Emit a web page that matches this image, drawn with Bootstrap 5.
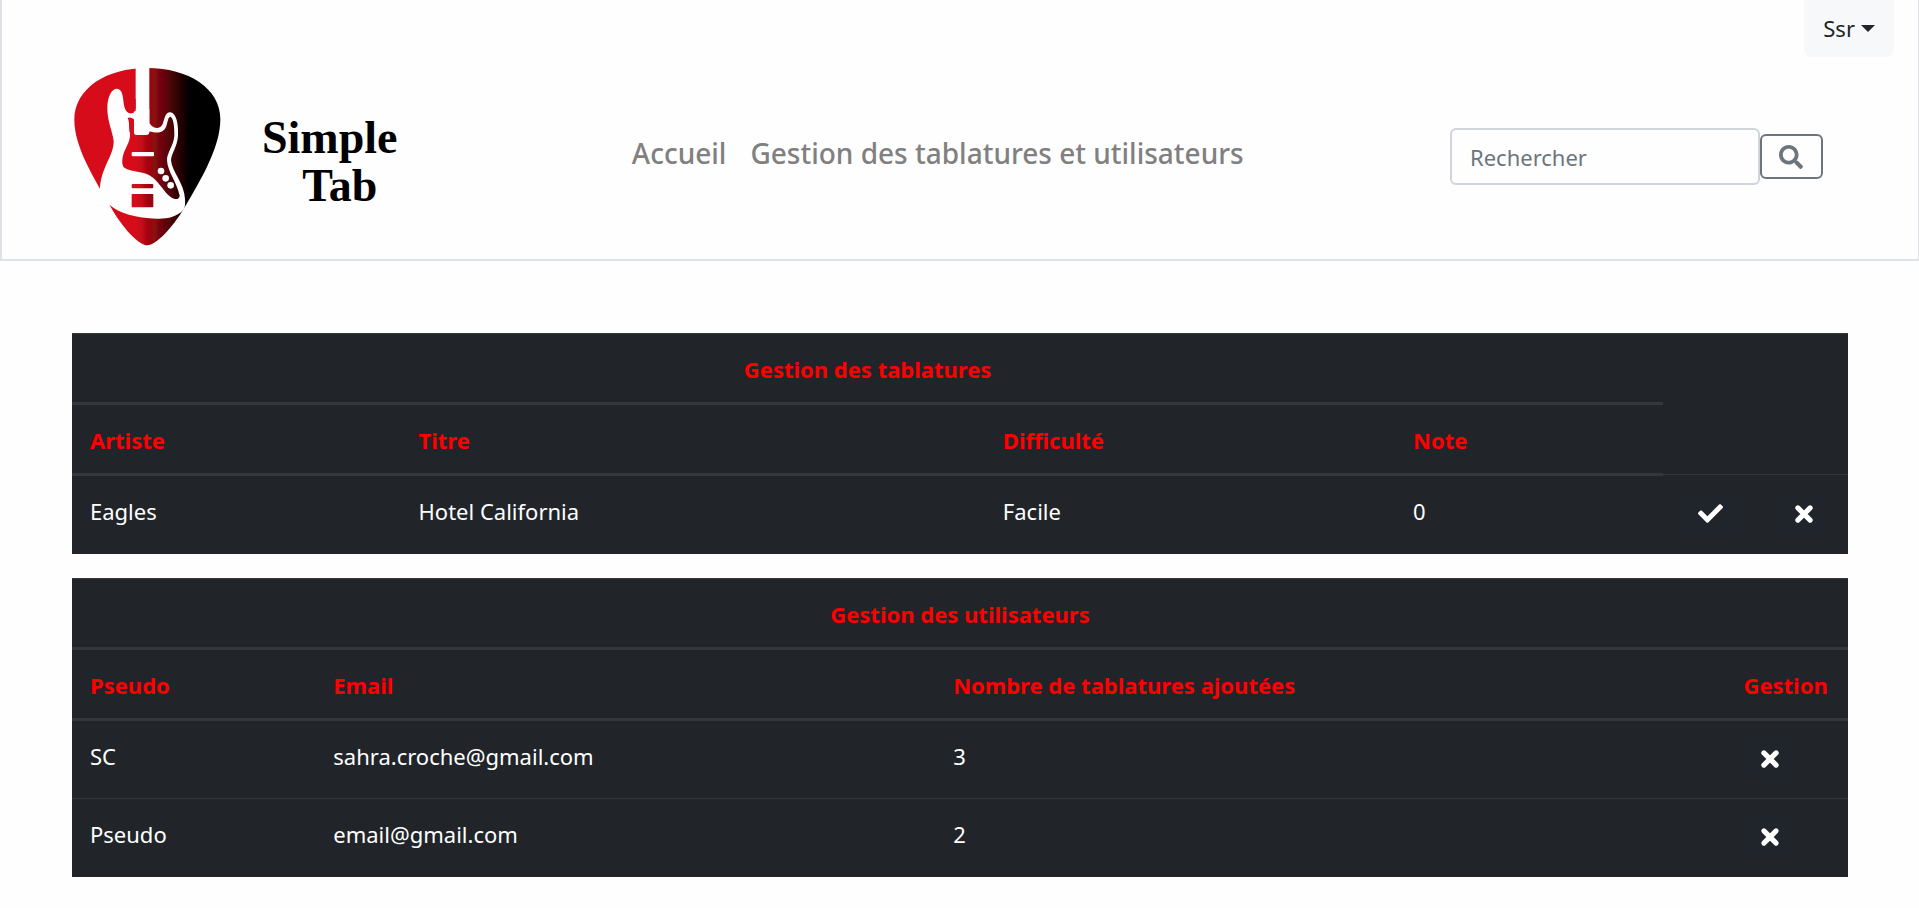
<!DOCTYPE html>
<html lang="fr">
<head>
<meta charset="utf-8">
<meta name="viewport" content="width=device-width, initial-scale=1">
<title>Simple Tab</title>
<link href="https://cdn.jsdelivr.net/npm/bootstrap@5.3.0/dist/css/bootstrap.min.css" rel="stylesheet">
<style>
  body { background: #fefefe; font-family: "Noto Sans", "Open Sans", sans-serif; font-size: 22px; line-height: 36px; }
  .site-header { border: 2px solid #dee2e6; border-top: 0; border-right-width: 1px; }
  .user-btn { height: 57px; padding: 0 19px; font-size: 22px; background: #f7f8fa; border: 0; border-radius: 0 0 8px 8px; }
  .user-btn.dropdown-toggle::after { border-width: 7px; border-bottom: 0; margin-left: 6px; vertical-align: 5px; }
  .header-main { padding: 2px 95px 5px 58px; }
  .brand-link { color: #000; padding-right: 28px; }
  .brand-name { font: bold 46px/48px "Liberation Serif", serif; text-align: center; margin-left: 22px; padding-top: 10px; }
  .brand-name span { display: block; padding-left: 20px; }
  .main-nav .nav-link { font-size: 28px; line-height: 36px; font-weight: 500; color: #808080; padding: 0 12px 8px; }
  .search-box { width: 310px; height: 57px; font-size: 22px; padding: 0 18px; border: 2px solid #ced4da; border-radius: 6px; background: #fefefe; }
  .search-box::placeholder { color: #6c757d; }
  .search-btn { width: 63px; height: 45px; padding: 0; border-width: 2px; border-radius: 6px; }
  .page-body { padding: 72px 71px 31px 72px; }
  .admin-table { --bs-table-bg: #212529; --bs-table-border-color: #32383e; table-layout: fixed; margin: 0; }
  .admin-table > * > tr > * { padding: 17px 18px 15px; vertical-align: top; }
  .admin-table th { color: #f00; border-bottom-width: 3px; white-space: nowrap; }
  .admin-table thead tr:first-child > * { border-top: 1px solid #32383e; }
  .admin-table tbody tr:last-child td { border-bottom: 0; }
  .admin-table tbody td { height: 79px; }
  .icon-btn { display: flex; align-items: center; justify-content: center; width: 53px; height: 41px; margin-top: 1px; padding: 0; border: 0; border-radius: 6px; background: #20252c; color: #fff; }
  .icon-btn.wide { width: 59px; }
</style>
</head>
<body>
<header class="site-header">
  <div class="d-flex justify-content-end pe-4">
    <div class="dropdown">
      <button class="btn user-btn dropdown-toggle" type="button" data-bs-toggle="dropdown" aria-expanded="false">Ssr</button>
    </div>
  </div>
  <div class="header-main d-flex align-items-center justify-content-between">
    <a class="brand-link d-flex align-items-center text-decoration-none" href="#">
      <svg width="180" height="195" viewBox="0 0 540 585" aria-hidden="true">
        <defs>
          <linearGradient id="pickFill" gradientUnits="userSpaceOnUse" x1="43" y1="0" x2="481" y2="0">
            <stop offset="0" stop-color="#d60c1b"/><stop offset=".42" stop-color="#d60c1b"/>
            <stop offset=".46" stop-color="#c21018"/><stop offset=".5" stop-color="#a8000f"/>
            <stop offset=".525" stop-color="#9a0410"/><stop offset=".55" stop-color="#86140f"/>
            <stop offset=".585" stop-color="#780010"/><stop offset=".66" stop-color="#4c0606"/>
            <stop offset=".73" stop-color="#220002"/><stop offset=".79" stop-color="#000"/>
          </linearGradient>
        </defs>
        <path fill="url(#pickFill)" d="M262 27C385 27 481 88 481 180C481 262 429 352 373 447C338 505 288 559 262 559C236 559 186 505 150 440C100 355 43 262 43 183C43 88 139 27 262 27Z"/>
        <path fill="#fefefe" d="M227 15H268V192C280 211 300 212 308 195C315 176 316 160 330 160C348 160 356 193 354 230C352 264 333 285 333 304C335 338 373 372 375 420C376 438 375 447 370 453C350 474 322 480 290 479C230 478 175 462 149 438L112 440L120 393C120 330 162 290 161 246C158 218 142 187 142 149C142 112 155 89 171 89C189 89 189 119 192 139C198 169 218 167 227 155Z"/>
        <path fill="url(#pickFill)" d="M203 177C210 173 216 176 222 181V219C222 228 228 228 235 228H256C265 228 268 226 268 217C292 225 313 221 319 201C324 186 324 174 331 173C340 175 344 204 343 230C340 263 320 281 321 304C323 340 350 367 359 410C358 421 346 424 332 414C311 398 302 376 280 357C253 333 218 342 194 327C182 318 187 290 194 275C205 253 211 241 210 223C205 209 210 190 203 177Z"/>
        <path fill="#fefefe" d="M222 150H268V217C268 225 265 227 256 227H235C226 227 222 225 222 217Z"/>
        <path fill="url(#pickFill)" d="M215 120H227V155L215 162Z"/>
        <g fill="#fefefe"><rect x="215" y="279" width="67" height="13" rx="3"/><circle cx="303" cy="336" r="10"/><circle cx="317" cy="358" r="10"/><circle cx="332" cy="379" r="10"/></g>
        <g fill="url(#pickFill)"><rect x="215" y="375" width="65" height="13" rx="3"/><rect x="215" y="405" width="65" height="40" rx="2"/></g>
      </svg>
      <span class="brand-name">Simple<span>Tab</span></span>
    </a>
    <nav class="main-nav nav flex-nowrap">
      <a class="nav-link" href="#">Accueil</a>
      <a class="nav-link" href="#">Gestion des tablatures et utilisateurs</a>
    </nav>
    <form class="d-flex align-items-center" role="search">
      <input class="form-control search-box" type="search" placeholder="Rechercher" aria-label="Rechercher">
      <button class="btn btn-outline-secondary search-btn d-flex align-items-center justify-content-center" type="button" aria-label="Lancer la recherche">
        <svg width="24" height="24" viewBox="0 0 512 512" fill="currentColor" aria-hidden="true"><path d="M505 442.700L405.300 343c-4.500-4.500-10.600-7-17-7H372c27.600-35.300 44-79.700 44-128C416 93.100 322.900 0 208 0S0 93.100 0 208s93.100 208 208 208c48.300 0 92.700-16.400 128-44v16.300c0 6.400 2.500 12.500 7 17l99.700 99.700c9.400 9.400 24.600 9.400 33.900 0l28.300-28.300c9.400-9.400 9.400-24.600.1-34zM208 336c-70.700 0-128-57.200-128-128 0-70.700 57.200-128 128-128 70.700 0 128 57.200 128 128 0 70.700-57.200 128-128 128z"/></svg>
      </button>
    </form>
  </div>
</header>

<svg class="d-none" aria-hidden="true">
  <symbol id="cross" viewBox="0 0 18 18"><path d="M3.500 3.500L14.500 14.500M14.500 3.500L3.500 14.500" stroke="currentColor" stroke-width="4.600" stroke-linecap="round"/></symbol>
  <symbol id="check" viewBox="0 0 512 512"><path fill="currentColor" d="M173.898 439.404l-166.400-166.400c-9.997-9.997-9.997-26.206 0-36.204l36.203-36.204c9.997-9.998 26.207-9.998 36.204 0L192 312.690 432.095 72.596c9.997-9.997 26.207-9.997 36.204 0l36.203 36.204c9.997 9.997 9.997 26.206 0 36.204l-294.400 294.401c-9.998 9.997-26.207 9.997-36.204-.001z"/></symbol>
</svg>

<main class="page-body d-flex flex-column gap-4">
  <table class="table table-dark admin-table">
    <colgroup><col style="width:18.5%"><col style="width:32.9%"><col style="width:23.1%"><col style="width:15.100%"><col style="width:5.400%"><col style="width:5%"></colgroup>
    <thead>
      <tr><th class="text-center" colspan="4">Gestion des tablatures</th><td colspan="2" rowspan="2"></td></tr>
      <tr><th>Artiste</th><th>Titre</th><th>Difficulté</th><th>Note</th></tr>
    </thead>
    <tbody>
      <tr>
        <td>Eagles</td><td>Hotel California</td><td>Facile</td><td>0</td>
        <td><button class="icon-btn wide" type="button" aria-label="Valider"><svg width="25" height="25"><use href="#check"/></svg></button></td>
        <td><button class="icon-btn" type="button" aria-label="Refuser"><svg width="20" height="20"><use href="#cross"/></svg></button></td>
      </tr>
    </tbody>
  </table>

  <table class="table table-dark admin-table">
    <colgroup><col style="width:13.700%"><col style="width:34.900%"><col style="width:44.500%"><col style="width:6.900%"></colgroup>
    <thead>
      <tr><th class="text-center" colspan="4">Gestion des utilisateurs</th></tr>
      <tr><th>Pseudo</th><th>Email</th><th>Nombre de tablatures ajoutées</th><th>Gestion</th></tr>
    </thead>
    <tbody>
      <tr>
        <td>SC</td><td>sahra.croche@gmail.com</td><td>3</td>
        <td><button class="icon-btn" type="button" aria-label="Supprimer SC"><svg width="20" height="20"><use href="#cross"/></svg></button></td>
      </tr>
      <tr>
        <td>Pseudo</td><td>email@gmail.com</td><td>2</td>
        <td><button class="icon-btn" type="button" aria-label="Supprimer Pseudo"><svg width="20" height="20"><use href="#cross"/></svg></button></td>
      </tr>
    </tbody>
  </table>
</main>
<script src="https://cdn.jsdelivr.net/npm/bootstrap@5.3.0/dist/js/bootstrap.bundle.min.js"></script>
</body>
</html>
